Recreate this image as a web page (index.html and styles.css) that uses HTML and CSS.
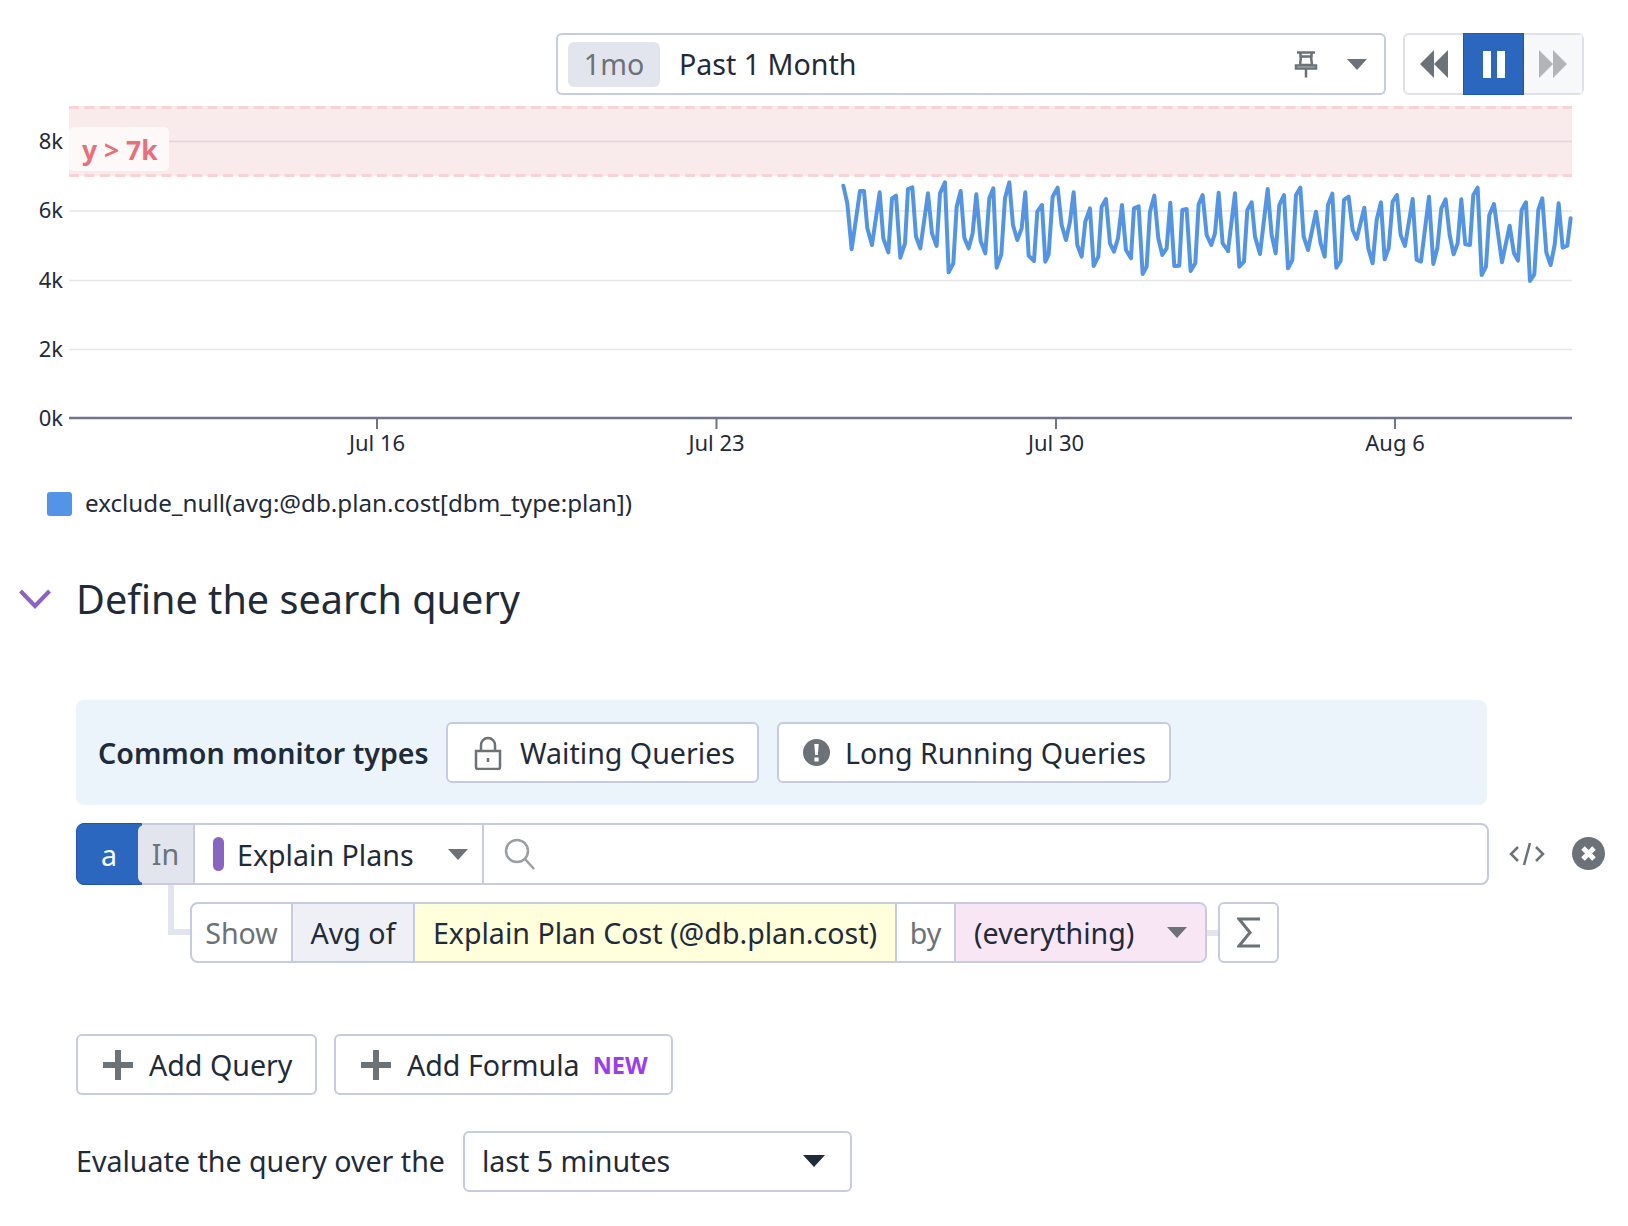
FILE: index.html
```html
<!DOCTYPE html>
<html lang="en">
<head>
    <meta charset="UTF-8">
    <title>Define the search query</title>
    <link rel="stylesheet" href="styles.css">
</head>
<body>
    <!-- Time controls -->
    <div class="top-bar">
        <div class="time-picker">
            <span class="time-chip">1mo</span>
            <span class="time-label">Past 1 Month</span>
            <svg class="pin-icon" width="24" height="28" viewBox="0 0 24 28">
                <path d="M3 2.500h18M6.500 2.500v4h11v-4M7 6.500l-1 8.500h12l-1-8.500M2 15.500h20v3H2zM12 18.500v9" fill="none" stroke="#6b7278" stroke-width="2.500"/>
            </svg>
            <span class="caret caret-grey"></span>
        </div>
        <div class="player">
            <div class="player-cell">
                <svg width="28" height="28" viewBox="0 0 28 28"><path d="M14 0v28L0 14zM28 0v28L14 14z" fill="#6b7278"/></svg>
            </div>
            <div class="player-cell player-active">
                <span class="pause-bar"></span><span class="pause-bar"></span>
            </div>
            <div class="player-cell player-off">
                <svg width="28" height="28" viewBox="0 0 28 28"><path d="M0 0v28l14-14zM14 0v28l14-14z" fill="#b1b5b8"/></svg>
            </div>
        </div>
    </div>

    <!-- Chart: coordinates in the viewBox are page pixels -->
    <svg class="chart" width="1628" height="370" viewBox="0 100 1628 370">
        <rect x="69" y="106" width="1503" height="70" fill="#f9eaeb"/>
        <path d="M69 107.500H1572M69 175.500H1572" stroke="#f8d3d6" stroke-width="3" stroke-dasharray="10 5.400"/>
        <path d="M69 141.500H1572" stroke="#e3d6d9" stroke-width="1.500"/>
        <path d="M69 211H1572M69 280.500H1572M69 349.500H1572" stroke="#e4e5e8" stroke-width="1.500"/>
        <path d="M69 418H1572" stroke="#6f738d" stroke-width="2.500"/>
        <path d="M377 418V429M716.500 418V429M1056 418V429M1395 418V429" stroke="#6f738d" stroke-width="2"/>

        <g fill="none" stroke="#5295e6" stroke-width="12" stroke-linejoin="round" stroke-linecap="round">
            <polyline transform="translate(830 165) scale(.3333)" points="40,62 52,115 65,253 90,78 102,78 112,190 126,240 149,82 160,220 175,262 186,100 198,92 211,278 225,235 234,72 247,67 258,215 271,250 294,85 306,205 320,243 330,85 345,52 356,322 370,295 380,125 392,78 403,218 416,250 428,205 439,88 452,228 466,265 478,100 490,70 500,308 514,268 525,100 538,52 549,180 562,225 575,190 586,82 596,272 612,288 622,140 636,120 646,290 656,268 668,95 683,68 695,180 708,225 720,170 731,82 742,240 755,275 766,170 780,130 791,303 805,275 815,125 828,102 840,235 852,260 864,220 876,120 888,255 903,280 912,130 926,124 938,327 950,305 960,140 973,92 985,220 997,270 1010,250 1021,113 1033,303 1048,302 1057,135 1070,132 1082,318 1096,295 1106,118 1118,90 1130,210 1144,240 1155,205 1166,83 1178,235 1195,258"/>
            <polyline transform="translate(1220 165) scale(.3333)" points="24,258 45,85 58,305 72,290 82,135 95,112 105,215 120,267 143,72 155,210 167,265 178,120 192,90 204,310 217,285 228,90 241,68 251,215 264,255 288,140 302,235 314,275 324,120 337,86 349,308 362,288 372,105 386,95 398,195 410,222 433,128 445,250 458,295 470,165 483,112 494,283 506,250 518,110 531,90 542,210 555,243 578,102 590,285 603,290 627,95 640,297 652,250 664,130 677,103 689,210 701,268 713,235 724,103 736,238 750,240 760,90 773,68 785,330 798,305 808,150 822,117 846,292 869,182 882,265 894,287 905,135 918,112 930,348 943,328 955,135 967,100 979,262 992,300 1004,240 1016,115 1028,248 1042,242 1052,160"/>
        </g>

        <rect x="69" y="127" width="100" height="44" rx="5" fill="#fdf9f8"/>
        <text class="zone-label" x="82" y="160">y &gt; 7k</text>

        <g class="axis-text" text-anchor="end">
            <text x="63" y="149">8k</text>
            <text x="63" y="218">6k</text>
            <text x="63" y="288">4k</text>
            <text x="63" y="357">2k</text>
            <text x="63" y="426">0k</text>
        </g>
        <g class="axis-text" text-anchor="middle">
            <text x="377" y="451">Jul 16</text>
            <text x="716.500" y="451">Jul 23</text>
            <text x="1056" y="451">Jul 30</text>
            <text x="1395" y="451">Aug 6</text>
        </g>
    </svg>

    <div class="legend">
        <span class="legend-swatch"></span>
        <span class="legend-text">exclude_null(avg:@db.plan.cost[dbm_type:plan])</span>
    </div>

    <div class="section-head">
        <svg width="32" height="20" viewBox="0 0 32 20"><path d="M1.500 2L16 17 30.500 2" fill="none" stroke="#8a64c4" stroke-width="4"/></svg>
        <h2>Define the search query</h2>
    </div>

    <!-- Common monitor types -->
    <div class="monitor-types">
        <strong>Common monitor types</strong>
        <button class="btn btn-waiting">
            <svg width="28" height="34" viewBox="0 0 28 34">
                <path d="M2 15h24v16a2 2 0 0 1-2 2H4a2 2 0 0 1-2-2z" fill="none" stroke="#6b7278" stroke-width="2.500"/>
                <path d="M7 15V9a7 7 0 0 1 14 0v6" fill="none" stroke="#6b7278" stroke-width="2.500"/>
                <path d="M14 22v4" stroke="#6b7278" stroke-width="2.500"/>
            </svg>
            Waiting Queries
        </button>
        <button class="btn btn-long">
            <svg width="27" height="27" viewBox="0 0 27 27">
                <circle cx="13.500" cy="13.500" r="13.500" fill="#6b7278"/>
                <path d="M11.300 5h4.400l-.8 11h-2.800zM11.400 18.500h4.200v4h-4.200z" fill="#fff"/>
            </svg>
            Long Running Queries
        </button>
    </div>

    <!-- Query row -->
    <div class="query-row">
        <div class="query-box">
            <span class="query-name">a</span>
            <span class="query-in">In</span>
            <span class="query-source">
                <span class="source-dot"></span>
                <span class="source-name">Explain Plans</span>
                <span class="caret caret-grey"></span>
            </span>
            <span class="query-search">
                <svg width="32" height="32" viewBox="0 0 32 32">
                    <circle cx="13" cy="13" r="11" fill="none" stroke="#9a9fa4" stroke-width="2.500"/>
                    <path d="M21 21l9 10" stroke="#9a9fa4" stroke-width="2.500"/>
                </svg>
            </span>
        </div>
        <svg class="code-icon" width="36" height="24" viewBox="0 0 36 24">
            <path d="M9 5L2 12l7 7M27 5l7 7-7 7M21 1l-6 22" fill="none" stroke="#6b7278" stroke-width="2.500"/>
        </svg>
        <svg class="close-icon" width="33" height="33" viewBox="0 0 33 33">
            <circle cx="16.500" cy="16.500" r="16.500" fill="#6b7278"/>
            <path d="M11 11l11 11M22 11L11 22" stroke="#fff" stroke-width="5"/>
        </svg>
    </div>

    <div class="show-row">
        <span class="connector"></span>
        <div class="show-box">
            <span class="show-cell show-muted show-word">Show</span>
            <span class="show-cell show-avg">Avg of</span>
            <span class="show-cell show-metric">Explain Plan Cost (@db.plan.cost)</span>
            <span class="show-cell show-muted show-by">by</span>
            <span class="show-cell show-group">(everything)<span class="caret caret-grey"></span></span>
        </div>
        <span class="stub"></span>
        <button class="btn btn-sigma">
            <svg width="24" height="31" viewBox="0 0 24 31"><path d="M23 2H2l11 13.500L2 29h21" fill="none" stroke="#6b7278" stroke-width="3"/></svg>
        </button>
    </div>

    <div class="add-row">
        <button class="btn btn-add-query"><span class="plus"></span>Add Query</button>
        <button class="btn btn-add-formula"><span class="plus"></span>Add Formula<span class="new-tag">NEW</span></button>
    </div>

    <div class="eval-row">
        <span>Evaluate the query over the</span>
        <div class="eval-select">last 5 minutes<span class="caret caret-dark"></span></div>
    </div>
</body>
</html>
```

FILE: styles.css
```css
* {
    box-sizing: border-box;
}
body {
    margin: 0;
    background: #ffffff;
    color: #1f2b38;
    font-family: "Noto Sans", sans-serif;
    font-size: 28.6px;
}
button {
    font: inherit;
    color: inherit;
}
.caret {
    display: block;
    flex: none;
    width: 0;
    height: 0;
    border-left: 10px solid transparent;
    border-right: 10px solid transparent;
    border-top: 11px solid #6b7278;
}
.caret-dark {
    border-top-color: #1f2b38;
    border-left-width: 11px;
    border-right-width: 11px;
    border-top-width: 12px;
}

/* top bar */
.top-bar {
    display: flex;
    height: 100px;
    padding: 33px 0 5px 556px;
    gap: 17px;
}
.time-picker {
    display: flex;
    align-items: center;
    width: 830px;
    border: 2px solid #c7cbdf;
    border-radius: 6px;
    padding: 0 17px 0 10px;
}
.time-chip {
    width: 92px;
    height: 45px;
    line-height: 44px;
    text-align: center;
    background: #e2e5ed;
    border-radius: 6px;
    color: #6b7278;
}
.time-label {
    margin: -2px 0 0 19px;
    flex: 1;
}
.pin-icon {
    margin-right: 29px;
}
.player {
    display: flex;
    width: 181px;
    border: 2px solid #dfe1ea;
    border-radius: 6px;
}
.player-cell {
    display: flex;
    align-items: center;
    justify-content: center;
    gap: 6px;
    flex: 1;
}
.player-active {
    flex: none;
    width: 61px;
    margin: -2px 0;
    background: #2b67bf;
    border: 1px solid #1f55b8;
}
.player-off {
    background: #f7f8fa;
}
.pause-bar {
    width: 8px;
    height: 27px;
    background: #ffffff;
}

/* chart */
.chart {
    display: block;
}
.axis-text text {
    font-size: 22px;
    fill: #1f2b38;
}
.zone-label {
    font-size: 26.500px;
    font-weight: 700;
    fill: #e96f7a;
}
.legend {
    display: flex;
    align-items: center;
    height: 24px;
    margin: 22px 0 0 47px;
    gap: 13px;
}
.legend-swatch {
    width: 25px;
    height: 24px;
    border-radius: 3px;
    background: #5295e6;
}
.legend-text {
    font-size: 24.2px;
    margin-top: -4px;
}

/* section */
.section-head {
    display: flex;
    align-items: center;
    height: 50px;
    margin: 58px 0 0 19px;
    gap: 25px;
}
.section-head h2 {
    margin: 0;
    font-size: 39.6px;
    font-weight: 400;
}
.btn {
    display: flex;
    align-items: center;
    height: 61px;
    background: #ffffff;
    border: 2px solid #c7cbdf;
    border-radius: 6px;
    padding: 0;
}
.monitor-types {
    display: flex;
    align-items: center;
    width: 1411px;
    height: 105px;
    margin: 76px 0 0 76px;
    padding-left: 22px;
    background: #ecf4fb;
    border-radius: 8px;
}
.monitor-types strong {
    font-weight: 600;
    width: 348px;
    flex: none;
}
.btn-waiting {
    width: 313px;
    padding-left: 26px;
    gap: 18px;
}
.btn-long {
    width: 394px;
    margin-left: 18px;
    padding-left: 24px;
    gap: 15px;
}

/* query rows */
.query-row {
    display: flex;
    align-items: center;
    margin: 18px 0 0 76px;
}
.query-box {
    display: flex;
    width: 1413px;
    height: 62px;
    border: 2px solid #c7cbdf;
    border-radius: 8px;
}
.query-name {
    width: 66px;
    margin: -2px 0 -2px -2px;
    line-height: 62px;
    text-align: center;
    color: #ffffff;
    background: #2b67bf;
    border: 1px solid #1f55b8;
    border-radius: 8px 0 0 8px;
}
.query-in {
    width: 57px;
    margin-left: -4px;
    line-height: 58px;
    text-align: center;
    color: #6b7278;
    background: #e2e5ed;
    border-radius: 6px 0 0 6px;
    border-right: 2px solid #c7cbdf;
}
.query-source {
    display: flex;
    align-items: center;
    width: 289px;
    padding-left: 18px;
    border-right: 2px solid #c7cbdf;
}
.source-dot {
    width: 11px;
    height: 34px;
    border-radius: 6px;
    background: #8a64c4;
}
.source-name {
    flex: 1;
    margin-left: 13px;
}
.query-source .caret {
    margin-right: 14px;
}
.query-search {
    display: flex;
    align-items: center;
    padding-left: 20px;
}
.code-icon {
    margin-left: 20px;
}
.close-icon {
    margin: -2px 0 0 27px;
}
.show-row {
    position: relative;
    display: flex;
    align-items: center;
    margin: 17px 0 0 190px;
}
.connector {
    position: absolute;
    left: -22px;
    top: -17px;
    width: 22px;
    height: 50px;
    border-left: 6px solid #e2e5ed;
    border-bottom: 6px solid #e2e5ed;
}
.show-box {
    display: flex;
    height: 61px;
    border: 2px solid #c7cbdf;
    border-radius: 8px;
    overflow: hidden;
}
.show-cell {
    display: flex;
    align-items: center;
    justify-content: center;
    border-right: 2px solid #c7cbdf;
}
.show-muted {
    color: #6b7278;
}
.show-word {
    width: 101px;
}
.show-avg {
    width: 122px;
    background: #eef0f5;
}
.show-metric {
    width: 482px;
    background: #ffffdb;
}
.show-by {
    width: 59px;
}
.show-group {
    width: 249px;
    justify-content: flex-start;
    padding-left: 18px;
    background: #f9e6f4;
    border-right: 0;
}
.show-group .caret {
    margin-left: 33px;
}
.stub {
    width: 11px;
    height: 6px;
    background: #e2e5ed;
}
.btn-sigma {
    width: 61px;
    justify-content: center;
}

/* bottom */
.add-row {
    display: flex;
    gap: 17px;
    margin: 71px 0 0 76px;
}
.plus {
    position: relative;
    width: 30px;
    height: 30px;
    margin-right: 16px;
    background:
        linear-gradient(#6b7278, #6b7278) center / 100% 6px no-repeat,
        linear-gradient(#6b7278, #6b7278) center / 6px 100% no-repeat;
}
.btn-add-query {
    width: 241px;
    padding-left: 25px;
}
.btn-add-formula {
    width: 339px;
    padding-left: 25px;
}
.new-tag {
    margin-left: 13px;
    font-size: 23.500px;
    font-weight: 700;
    color: #9a3df0;
}
.eval-row {
    display: flex;
    align-items: center;
    margin: 36px 0 0 76px;
    gap: 18px;
}
.eval-row > span {
    margin-top: -2px;
}
.eval-select {
    display: flex;
    align-items: center;
    justify-content: space-between;
    width: 389px;
    height: 61px;
    padding: 0 25px 2px 17px;
    border: 2px solid #c7cbdf;
    border-radius: 6px;
}
```
